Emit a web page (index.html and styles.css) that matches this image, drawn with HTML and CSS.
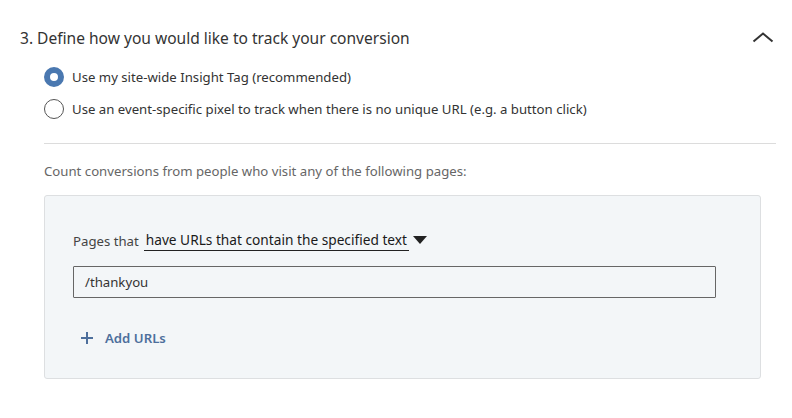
FILE: index.html
```html
<!DOCTYPE html>
<html>
<head>
<meta charset="utf-8">
<link rel="stylesheet" href="styles.css">
</head>
<body>
<section class="step">
  <div class="step-header">
    <h2 class="step-title">3. Define how you would like to track your conversion</h2>
    <svg class="chevron" width="22" height="12" viewBox="0 0 22 12"><path d="M1.5 10.5 L11 2.5 L20.5 10.5" fill="none" stroke="#333" stroke-width="2"/></svg>
  </div>
  <div class="options">
    <label class="option">
      <span class="radio checked"></span>
      <span>Use my site-wide Insight Tag (recommended)</span>
    </label>
    <label class="option">
      <span class="radio"></span>
      <span>Use an event-specific pixel to track when there is no unique URL (e.g. a button click)</span>
    </label>
  </div>
  <div class="divider"></div>
  <p class="hint">Count conversions from people who visit any of the following pages:</p>
  <div class="panel">
    <div class="rule">
      <span class="rule-label">Pages that</span>
      <span class="select">have URLs that contain the specified text</span>
      <svg class="caret" width="14" height="8" viewBox="0 0 14 8"><path d="M0 0 H14 L7 8 Z" fill="#222"/></svg>
    </div>
    <div class="field">/thankyou</div>
    <div class="add">
      <svg class="plus" width="12" height="12" viewBox="0 0 12 12"><path d="M6 0 V12 M0 6 H12" stroke="#4d6f9c" stroke-width="2"/></svg>
      <span>Add URLs</span>
    </div>
  </div>
</section>
</body>
</html>
```
FILE: styles.css
```css
html, body {
  margin: 0;
  padding: 0;
  background: #fff;
}
body {
  font-family: "Noto Sans", "Open Sans", sans-serif;
  color: #333;
}
.step {
  padding: 28px 16px 0 20px;
}
.step-header {
  display: flex;
  align-items: center;
  justify-content: space-between;
  height: 20px;
}
.step-title {
  margin: 0;
  font-size: 15.55px;
  font-weight: 400;
  line-height: 20px;
  color: #333;
}
.chevron {
  margin-right: 2px;
  margin-top: -2px;
}
.options {
  margin: 13px 0 0 24px;
}
.option {
  display: flex;
  align-items: center;
  height: 32px;
  font-size: 13.2px;
  color: #333;
}
.radio {
  box-sizing: border-box;
  width: 20px;
  height: 20px;
  border-radius: 50%;
  border: 1px solid #555;
  margin-right: 8px;
  flex: none;
  background: #fff;
}
.radio.checked {
  border: 6.5px solid #4a78b0;
  background: #fff;
}
.divider {
  margin: 18px 0 0 24px;
  height: 1px;
  background: #dcdcdc;
}
.hint {
  margin: 18px 0 0 24px;
  font-size: 13.2px;
  line-height: 18px;
  color: #666;
}
.panel {
  margin: 15px 15px 0 24px;
  background: #f3f6f8;
  border: 1px solid #dddfe1;
  border-radius: 3px;
  padding: 33px 44px 30px 28px;
}
.rule {
  display: flex;
  align-items: center;
  height: 24px;
  font-size: 13.2px;
}
.rule-label {
  color: #444;
  margin-right: 5px;
}
.select {
  color: #1a1a1a;
  font-size: 13.7px;
  font-weight: 400;
  border-bottom: 1px solid #222;
  padding: 0 2px 1px;
  line-height: 18px;
}
.caret {
  margin-left: 4px;
  margin-top: -2px;
}
.field {
  box-sizing: border-box;
  margin-top: 13px;
  height: 32px;
  border: 1px solid #666;
  border-radius: 1px;
  padding: 0 11px;
  display: flex;
  align-items: center;
  font-size: 13.2px;
  color: #333;
}
.add {
  display: flex;
  align-items: center;
  margin: 30px 0 0 8px;
  height: 20px;
  font-size: 13.2px;
  font-weight: 600;
  color: #4d6f9c;
}
.plus {
  margin-right: 12px;
}
```
